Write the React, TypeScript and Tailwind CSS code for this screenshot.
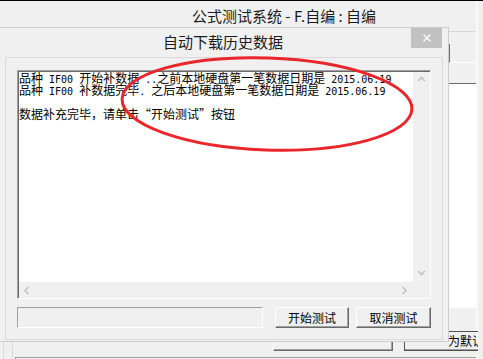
const cjk = "font-['Noto_Sans_CJK_SC',sans-serif]";

// SimSun-like cells: CJK 12px, ASCII 6px (mono at 10px)
const LogLine = ({ text }: { text: string }) => {
  const parts = text.split(/([\x20-\x7e]+)/).filter(Boolean);
  return (
    <div className="h-[12px] whitespace-pre text-[12px] leading-[12px] text-black">
      {parts.map((p, i) =>
        /^[\x20-\x7e]+$/.test(p) ? (
          <span key={i} className="font-['DejaVu_Sans_Mono',monospace] text-[10px]">
            {p}
          </span>
        ) : (
          Array.from(p).map((ch, j) => (
            <span
              key={i + "-" + j}
              className={
                "inline-block w-[12px] " +
                (ch === "“" ? "text-right" : ch === "”" ? "text-left" : "text-center")
              }
            >
              {ch}
            </span>
          ))
        )
      )}
    </div>
  );
};

const Chevron = ({ dir }: { dir: "up" | "down" | "left" | "right" }) => {
  const pts = {
    up: "1,5 4.5,1.5 8,5",
    down: "1,2 4.5,5.5 8,2",
    left: "5.5,1 2,4.5 5.5,8",
    right: "2.5,1 6,4.5 2.5,8",
  }[dir];
  return (
    <svg width="9" height="9" viewBox="0 0 9 9">
      <polyline points={pts} fill="none" stroke="#c2c2c2" strokeWidth="1.6" />
    </svg>
  );
};

const ClassicButton = ({ label, w }: { label: string; w: string }) => (
  <div
    className={
      w +
      " flex h-[21px] items-center justify-center border border-t-white border-l-white border-b-[#696969] border-r-[#696969] bg-[#f0f0f0] text-[12px] text-black shadow-[inset_-1px_-1px_0_#a0a0a0]"
    }
  >
    {label}
  </div>
);

export default function App() {
  return (
    <div className={"relative flex h-[359px] w-[483px] flex-col overflow-hidden bg-[#f0f0f0] " + cjk}>
      <div className="h-px bg-black" />
      <div className="flex min-h-0 flex-1">
        {/* main window behind */}
        <div className="flex w-[478px] flex-col border-r-2 border-[#f9f9f9]">
          <div className="flex h-[30px] items-center pl-[192px] text-[15px] text-[#1b1b1b]">
            公式测试系统 - F.自编 : 自编
          </div>
          <div className="flex min-h-0 flex-1 border-t border-[#d7d7d7]">
            <div className="w-[3px]" />
            <div className="w-[9px] border-l border-[#dcdcdc]" />
            <div className="w-[3px] border-l border-[#dcdcdc]" />
            <div className="flex min-w-0 flex-1 flex-col">
              <div className="flex min-h-0 flex-1 justify-end">
                <div className="flex w-[27px] flex-col">
                  <div className="h-[12px]" />
                  <div className="h-[19px] border-l border-b border-l-[#6d6d6d] border-b-white" />
                  <div className="h-[20px]" />
                  <div className="h-[225px] border-t border-[#696969] bg-white" />
                </div>
              </div>
              <div className="flex h-[20px] gap-[11px] pl-[258px]">
                <div className="w-[120px] shrink-0 border border-t-white border-l-white border-b-[#696969] border-r-[#696969] shadow-[inset_-1px_-1px_0_#a0a0a0]" />
                <div className="flex w-[112px] shrink-0 items-center whitespace-nowrap border border-[#505050] pl-[43px] text-[12px] text-black shadow-[inset_-1px_-1px_0_#a0a0a0]">
                  为默认
                </div>
              </div>
              <div className="mt-[6px] h-[2px] border-t border-l border-[#a0a0a0]" />
            </div>
          </div>
        </div>
        <div className="flex-1 bg-[#f6eeed]" />
      </div>

      {/* dialog */}
      <div className="absolute left-[-4px] top-[27px] flex h-[315px] w-[453px] flex-col border border-[#cdcdcd] bg-[#f0f0f0]">
        <div className="flex h-[29px]">
          <div className="flex items-center pl-[166px] text-[15px] text-[#1b1b1b]">自动下载历史数据</div>
          <div className="ml-auto mr-[6px] flex h-[20px] w-[31px] items-center justify-center bg-[#c1c1c1]">
            <svg width="10" height="10" viewBox="0 0 10 10">
              <path d="M1.5 1.5 L8.5 8.5 M8.5 1.5 L1.5 8.5" stroke="#fff" strokeWidth="1.3" />
            </svg>
          </div>
        </div>
        <div className="mb-px ml-[8px] mr-[5px] flex flex-1 flex-col border border-[#dadada] px-[11px] pb-[11px] pt-[12px]">
          <div className="grid min-h-0 flex-1 grid-cols-[1fr_17px] grid-rows-[1fr_16px] border border-t-[#a0a0a0] border-l-[#a0a0a0] border-b-white border-r-white shadow-[inset_1px_1px_0_#696969,inset_-1px_-1px_0_#e3e3e3]">
            <div className="ml-px mt-px overflow-hidden bg-white">
              <LogLine text="品种 IF00 开始补数据 ..之前本地硬盘第一笔数据日期是 2015.06.19" />
              <LogLine text="品种 IF00 补数据完毕. 之后本地硬盘第一笔数据日期是 2015.06.19" />
              <div className="h-[12px]" />
              <LogLine text="数据补充完毕，请单击“开始测试”按钮" />
            </div>
            <div className="mt-px flex flex-col justify-between bg-[#f0f0f0]">
              <div className="flex h-[17px] items-center justify-center">
                <Chevron dir="up" />
              </div>
              <div className="flex h-[17px] items-center justify-center">
                <Chevron dir="down" />
              </div>
            </div>
            <div className="ml-px flex items-center justify-between bg-[#f0f0f0]">
              <div className="flex w-[17px] justify-center">
                <Chevron dir="left" />
              </div>
              <div className="flex w-[17px] justify-center">
                <Chevron dir="right" />
              </div>
            </div>
            <div className="bg-[#f0f0f0]" />
          </div>
          <div className="mt-[8px] flex h-[21px]">
            <div className="w-[246px] border border-t-[#a0a0a0] border-l-[#a0a0a0] border-b-white border-r-white" />
            <div className="ml-[12px]">
              <ClassicButton label="开始测试" w="w-[74px]" />
            </div>
            <div className="ml-[7px]">
              <ClassicButton label="取消测试" w="w-[75px]" />
            </div>
          </div>
        </div>
      </div>

      {/* red annotation */}
      <svg className="pointer-events-none absolute inset-0" width="483" height="359">
        <ellipse
          cx="267"
          cy="104"
          rx="145"
          ry="46"
          transform="rotate(2 267 104)"
          fill="none"
          stroke="#e8262c"
          strokeWidth="3"
        />
      </svg>
    </div>
  );
}
